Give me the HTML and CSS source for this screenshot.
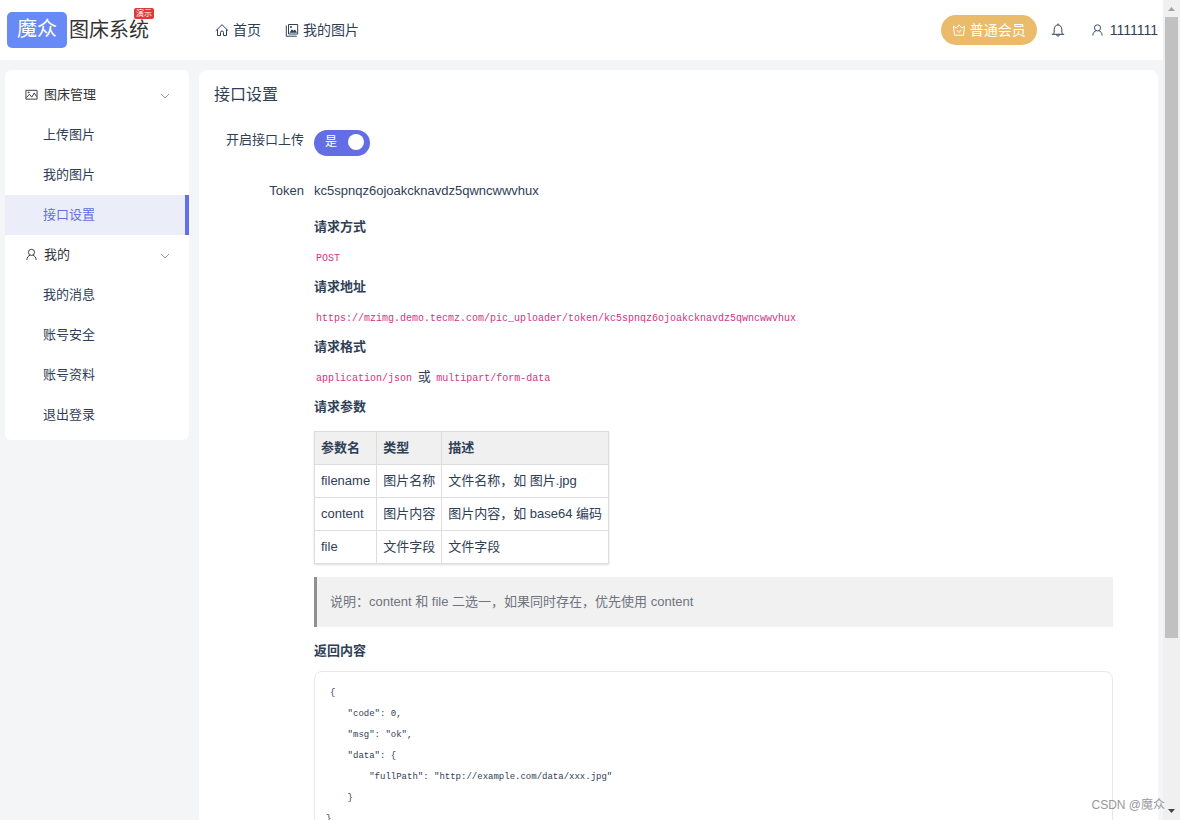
FILE: index.html
```html
<!DOCTYPE html>
<html lang="zh-CN">
<head>
<meta charset="utf-8">
<meta name="viewport" content="width=device-width, initial-scale=1">
<title>接口设置</title>
<link rel="stylesheet" href="styles.css">
</head>
<body>
<div class="page">
  <header class="header">
    <a class="logo" href="#"><span class="logo-mark">魔众</span><span class="logo-name">图床系统<span class="logo-badge">演示</span></span></a>
    <nav class="nav">
      <a href="#"><svg class="icon" viewBox="0 0 14 14"><path d="M.8 7.800 7 1.700l6.200 6.100M2.500 6.500v6h3V9.500a1.500 1.500 0 0 1 3 0v3h3v-6"/></svg>首页</a>
      <a href="#"><svg class="icon" viewBox="0 0 14 14"><path d="M3.500 1.500h9.200v9.500H3.500zM1.300 2.500v10.700h10.500"/><path class="solid" d="m4.500 9.800 2.300-3.600 1.700 1.600 1.500-1.300 2 3.300z"/><circle class="solid" cx="6" cy="4" r="1"/></svg>我的图片</a>
    </nav>
    <div class="account">
      <a class="vip" href="#"><svg class="icon" viewBox="0 0 14 14"><path d="m1.500 3.200 2.800 1.900L7 1.800l2.700 3.300 2.800-1.900-1 9H2.500zM4.800 7 7 9.500 9.200 7"/></svg>普通会员</a>
      <a class="bell" href="#" aria-label="消息"><svg class="icon" viewBox="0 0 14 14"><path d="M.8 11.300h12.400M2.400 11.300C3.300 10 3.200 8.500 3.200 6.500c0-2.600 1.500-4.500 3.800-4.500s3.800 1.900 3.800 4.500c0 2-.1 3.500.8 4.800M7 .5V2M5.800 11.500v.7a1.200 1 0 0 0 2.400 0v-.7"/></svg></a>
      <a class="user" href="#"><svg class="icon" viewBox="0 0 14 14"><circle cx="7" cy="4.700" r="3.300"/><path d="M2 13c.1-3 1.700-4.700 3.600-5.200M12 13c-.1-3-1.700-4.700-3.600-5.200"/></svg>1111111</a>
    </div>
  </header>
  <div class="body">
    <aside class="menu">
      <button class="menu-title" type="button"><svg class="icon" viewBox="0 0 14 14"><path d="M1 2.500h12v9.500H1zM1.500 10.300l3.300-3.500 2.500 3 2.700-4.500 2.500 4"/><circle cx="4" cy="4.800" r=".6"/></svg><span>图床管理</span><svg class="icon chevron" viewBox="0 0 10 10"><path d="m1 4 4 4 4-4"/></svg></button>
      <a href="#">上传图片</a>
      <a href="#">我的图片</a>
      <a class="active" href="#">接口设置</a>
      <button class="menu-title" type="button"><svg class="icon" viewBox="0 0 14 14"><circle cx="7" cy="4.700" r="3.300"/><path d="M2 13c.1-3 1.700-4.700 3.600-5.200M12 13c-.1-3-1.700-4.700-3.600-5.200"/></svg><span>我的</span><svg class="icon chevron" viewBox="0 0 10 10"><path d="m1 4 4 4 4-4"/></svg></button>
      <a href="#">我的消息</a>
      <a href="#">账号安全</a>
      <a href="#">账号资料</a>
      <a href="#">退出登录</a>
    </aside>
    <main class="panel">
      <h1>接口设置</h1>
      <div class="form">
        <label class="label" for="enable">开启接口上传</label>
        <div class="field"><span class="switch"><input id="enable" type="checkbox" role="switch" checked><span class="switch-text">是</span><span class="knob"></span></span></div>
        <div class="label">Token</div>
        <div class="field">kc5spnqz6ojoakcknavdz5qwncwwvhux</div>
        <div class="field doc">
          <h2>请求方式</h2>
          <p><code>POST</code></p>
          <h2>请求地址</h2>
          <p><code>https://mzimg.demo.tecmz.com/pic_uploader/token/kc5spnqz6ojoakcknavdz5qwncwwvhux</code></p>
          <h2>请求格式</h2>
          <p><code>application/json</code> 或 <code>multipart/form-data</code></p>
          <h2>请求参数</h2>
          <table>
            <thead><tr><th>参数名</th><th>类型</th><th>描述</th></tr></thead>
            <tbody>
              <tr><td>filename</td><td>图片名称</td><td>文件名称，如 图片.jpg</td></tr>
              <tr><td>content</td><td>图片内容</td><td>图片内容，如 base64 编码</td></tr>
              <tr><td>file</td><td>文件字段</td><td>文件字段</td></tr>
            </tbody>
          </table>
          <blockquote>说明：content 和 file 二选一，如果同时存在，优先使用 content</blockquote>
          <h2>返回内容</h2>
          <pre><code>{
    "code": 0,
    "msg": "ok",
    "data": {
        "fullPath": "http://example.com/data/xxx.jpg"
    }
}</code></pre>
        </div>
      </div>
    </main>
  </div>
</div>
<div class="scrollbar" aria-hidden="true">
  <svg class="arrow" viewBox="0 0 17 17"><path d="M5 11h7L8.500 7z"/></svg>
  <div class="track"><div class="thumb"></div></div>
  <svg class="arrow arrow-down" viewBox="0 0 17 17"><path d="M5 6h7l-3.500 4z"/></svg>
</div>
<div class="watermark">CSDN @魔众</div>
</body>
</html>
```
FILE: styles.css
```css
* { box-sizing: border-box; }
body {
  margin: 0;
  height: 100vh;
  overflow: hidden;
  display: flex;
  background: #f4f5f7;
  color: #2f4056;
  font: 13px/20px "Liberation Sans", "Noto Sans CJK SC", sans-serif;
}
a { color: inherit; text-decoration: none; }
.icon {
  width: 14px;
  height: 14px;
  flex: none;
  fill: none;
  stroke: currentColor;
  stroke-width: 1;
}
.icon .solid { fill: currentColor; stroke: none; }
.page { flex: 1; min-width: 0; height: 100%; overflow: hidden; }

.header {
  display: flex;
  align-items: center;
  height: 60px;
  padding: 0 5px 0 7px;
  background: #fff;
  font-size: 14px;
}
.logo { display: flex; align-items: center; gap: 2px; width: 208px; font-size: 20px; }
.logo-mark {
  width: 60px;
  height: 36px;
  border-radius: 5px;
  background: #688af6;
  color: #fff;
  line-height: 34px;
  text-align: center;
}
.logo-name { position: relative; color: #333; }
.logo-badge {
  position: absolute;
  top: -12px;
  right: -5px;
  padding: 0 2px;
  border-radius: 2px;
  background: #dc3a36;
  color: #fff;
  font-size: 8px;
  line-height: 11px;
}
.nav { display: flex; gap: 24px; }
.nav a { display: flex; align-items: center; gap: 4px; }
.account { display: flex; align-items: center; margin-left: auto; }
.vip {
  display: flex;
  align-items: center;
  gap: 4px;
  height: 30px;
  padding: 0 11px;
  border-radius: 15px;
  background: #e9bb6b;
  color: #fff;
}
.bell { display: flex; margin: 0 26px 0 14px; }
.user { display: flex; align-items: center; gap: 6px; }
.user .icon { width: 13px; }

.body { display: flex; align-items: flex-start; gap: 10px; padding: 10px 5px; }
.menu { width: 184px; flex: none; padding: 5px 0; border-radius: 6px; background: #fff; }
.menu a { display: block; padding-left: 38px; line-height: 39px; height: 40px; }
.menu .active { border-right: 4px solid #636de6; background: #ebedf9; color: #636de6; }
.menu-title {
  display: flex;
  align-items: center;
  gap: 6px;
  width: 100%;
  height: 40px;
  padding: 0 19px 1px 20px;
  border: 0;
  background: none;
  color: #333;
  font: inherit;
}
.menu-title .icon { width: 13px; height: 13px; }
.menu-title .chevron { width: 10px; height: 10px; margin-left: auto; color: #999; }

.panel { flex: 1; min-width: 0; padding: 15px 45px 15px 15px; border-radius: 8px; background: #fff; }
h1 { margin: 0 0 25px; font-size: 16px; font-weight: 400; line-height: 20px; }
.form { display: grid; grid-template-columns: 90px minmax(0, 1fr); column-gap: 10px; }
.label { text-align: right; }
.label:first-child + .field { height: 51px; }
.switch {
  position: relative;
  display: flex;
  align-items: center;
  justify-content: space-between;
  width: 56px;
  height: 26px;
  padding: 0 6px 2px 11px;
  border-radius: 13px;
  background: #636de6;
  color: #fff;
  font-size: 12px;
}
.switch input { position: absolute; inset: 0; width: 100%; height: 100%; margin: 0; opacity: 0; }
.knob { width: 16px; height: 16px; border-radius: 50%; background: #fff; }

.doc { grid-column: 2; padding-top: 16px; }
.doc h2, .doc p { margin: 0 0 10px; font-size: 13px; line-height: 20px; }
.doc code { padding: 0 2px; color: #d63384; font: 10px/1 "Liberation Mono", monospace; }
table {
  margin: 14px 0 13px;
  border-collapse: collapse;
  box-shadow: 0 1px 2px #ddd;
}
th, td { height: 33px; padding: 0 6px; border: 1px solid #ddd; text-align: left; }
th { background: #f0f0f0; }
blockquote {
  margin: 0 0 14px;
  padding: 15px 13px;
  border-left: 3px solid #909090;
  background: #f1f1f1;
  color: #6f7480;
}
pre {
  margin: 0;
  padding: 11px;
  border: 1px solid #e6e7ef;
  border-radius: 8px;
  font: 9px/21px "Liberation Mono", monospace;
}
.doc pre code { padding: 0 4px; color: inherit; font: inherit; }

.scrollbar { display: flex; flex-direction: column; width: 17px; background: #f0f0f0; }
.arrow { width: 17px; height: 17px; fill: #a3a3a3; }
.arrow-down { fill: #444; }
.track { flex: 1; padding: 0 2px; }
.thumb { height: 79%; background: #c1c1c1; }
.watermark {
  position: absolute;
  right: 15px;
  bottom: 5px;
  color: #999;
  font-size: 12px;
}
```
